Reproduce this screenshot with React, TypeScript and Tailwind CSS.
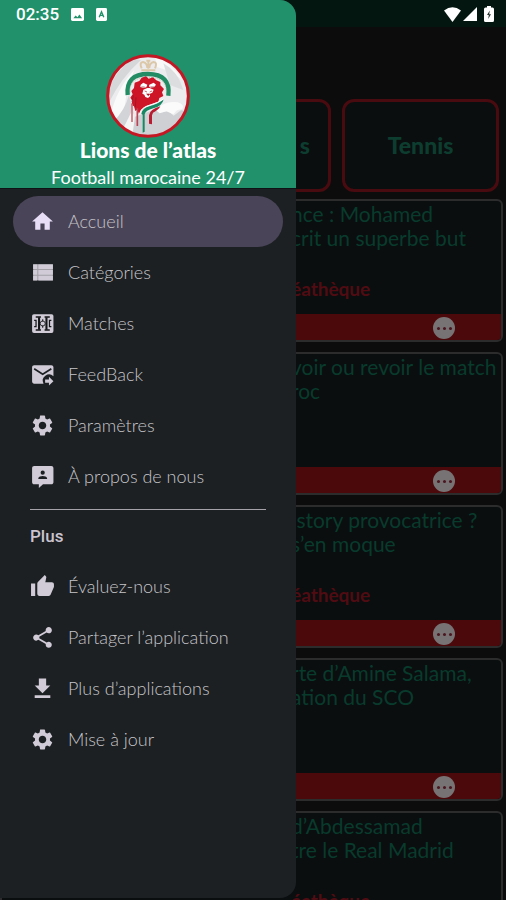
import type { ReactNode } from "react";
import { MdHome, MdSettings, MdShare, MdThumbUp } from "react-icons/md";

type MenuEntry = {
  label: string;
  icon: ReactNode;
  active?: boolean;
};

type Article = {
  lines: string[];
  tag?: string;
};

const iconClass = "h-[25px] w-[25px] shrink-0";

function ListIcon() {
  return (
    <svg viewBox="0 0 24 24" fill="currentColor" className={iconClass}>
      <path fillOpacity=".75" d="M3 4h19v15.500H3z" />
      <path d="M3 4.200h4v4.400H3zM8 4.200h14v4.400H8zM3 9.700h4v4.400H3zM8 9.700h14v4.400H8zM3 15.200h4v4.400H3zM8 15.200h14v4.400H8z" />
    </svg>
  );
}

function PitchIcon() {
  return (
    <svg viewBox="0 0 24 24" className={iconClass}>
      <rect x="2" y="3" width="20.500" height="18" rx="1.800" fill="currentColor" />
      <g fill="none" stroke="#141719">
        <path d="M5.500 5.800h5M14 5.800h5M5.500 18.200h5M14 18.200h5" strokeWidth="1.400" />
        <path d="M4 9h1.800v6H4M20.500 9h-1.800v6h1.800" strokeWidth="1.200" />
        <path d="M8.700 6v12M15.800 6v12" strokeWidth="2" />
        <path d="M12.200 8v2M12.200 14v2" strokeWidth="1" />
        <circle cx="12.200" cy="12" r="2.400" strokeWidth=".8" />
      </g>
    </svg>
  );
}

function FeedbackIcon() {
  return (
    <svg viewBox="0 0 24 24" className={iconClass}>
      <path
        fill="currentColor"
        d="M4 3h16.500c1.100 0 2 .9 2 2v8.700A6 6 0 0 0 13 20.800H4c-1.100 0-2-.9-2-2V5c0-1.100.9-2 2-2z"
      />
      <path d="M4 6.500l8.200 5.300 8.300-5.300" fill="none" stroke="#1c2023" strokeWidth="1.600" />
      <path fill="currentColor" d="M14.500 16.800h3.700v-2.600l4.300 4.200-4.300 4.200V20h-3.700z" />
    </svg>
  );
}

function AboutIcon() {
  return (
    <svg viewBox="0 0 24 24" className={iconClass}>
      <path
        fill="currentColor"
        d="M20.500 2H4c-1.100 0-2 .9-2 2v13.500c0 1.100.9 2 2 2h4.500v3.600l4-3.600h8c1.100 0 2-.9 2-2V4c0-1.100-.9-2-2-2z"
      />
      <circle cx="12.200" cy="8.300" r="2" fill="#1c2023" />
      <path fill="#1c2023" d="M8 14.500v-.8c0-1.500 2.600-2.300 4.200-2.300s4.200.8 4.200 2.300v.8z" />
    </svg>
  );
}

function DownloadIcon() {
  return (
    <svg viewBox="0 0 24 24" fill="currentColor" className={iconClass}>
      <path d="M19.500 9h-4V2.500h-7V9h-4l7.500 7.500zM4.500 18.500V21h15v-2.500z" />
    </svg>
  );
}

const mainMenu: MenuEntry[] = [
  { label: "Accueil", icon: <MdHome className={iconClass} />, active: true },
  { label: "Catégories", icon: <ListIcon /> },
  { label: "Matches", icon: <PitchIcon /> },
  { label: "FeedBack", icon: <FeedbackIcon /> },
  { label: "Paramètres", icon: <MdSettings className={iconClass} /> },
  { label: "À propos de nous", icon: <AboutIcon /> },
];

const moreMenu: MenuEntry[] = [
  { label: "Évaluez-nous", icon: <MdThumbUp className={iconClass} /> },
  { label: "Partager l’application", icon: <MdShare className={iconClass} /> },
  { label: "Plus d’applications", icon: <DownloadIcon /> },
  { label: "Mise à jour", icon: <MdSettings className={iconClass} /> },
];

const articles: Article[] = [
  { lines: ["nce : Mohamed", "crit un superbe but"], tag: "éathèque" },
  { lines: ["voir ou revoir le match", "roc"] },
  { lines: [" story provocatrice ?", "s’en moque"], tag: "éathèque" },
  { lines: ["rte d’Amine Salama,", "ation du SCO"] },
  { lines: ["d’Abdessamad", "tre le Real Madrid"], tag: "éathèque" },
];

function Logo() {
  return (
    <svg viewBox="33 27 252 252" className="h-[84px] w-[84px] shrink-0" role="img" aria-label="Lions de l’atlas">
      <defs>
        <clipPath id="disc">
          <circle cx="159" cy="153" r="119" />
        </clipPath>
      </defs>
      <circle cx="159" cy="153" r="121" fill="#ececee" />
      <g clipPath="url(#disc)">
        <path d="M33 190Q75 100 138 45L110 42Q50 90 33 150z" fill="#d6d7d9" />
        <path d="M45 215Q65 130 118 75Q85 145 90 215L65 250z" fill="#fafafa" />
        <path d="M55 230Q90 195 102 150L116 205Q95 235 75 260z" fill="#d3d4d7" />
        <path d="M85 250L112 195L122 240L105 275z" fill="#f5f5f6" />
        <path d="M182 35Q235 55 262 105Q225 75 182 65z" fill="#f8f8f8" />
        <path d="M205 55Q250 80 265 135L225 120z" fill="#dcdddf" />
        <path d="M120 215L190 190L200 202L220 198L236 212L258 196L285 200L250 270L110 285z" fill="#cfd0d3" />
        <path d="M182 195Q210 165 248 172Q270 178 262 192L246 196L235 208L214 199L194 205z" fill="#fbfbfb" />
      </g>
      <g fill="none" stroke="#dcc8a8" strokeWidth="6">
        <path d="M139 76h42M140 70q-8-18 4-19q12 2 13 18M180 70q8-18-4-19q-12 2-13 18M160 71V47M154 47h12" />
      </g>
      <path d="M98 150Q92 87 159 87Q228 87 220 152" fill="none" stroke="#238c65" strokeWidth="13" />
      <path d="M105 143Q102 97 159 97Q216 97 214 143" fill="none" stroke="#a4ad80" strokeWidth="2" strokeDasharray="3 3" />
      <path
        fill="#ce1528"
        d="M153 94L161 101L174 97L184 106L196 111L196 121L207 132L201 142L205 153L193 159L190 170L171 178L153 184L139 194L132 207L127 194L121 198L117 184L109 180L112 167L106 158L113 148L109 138L117 129L119 113L133 108L140 98z"
      />
      <g fill="#fff">
        <path d="M137 119l8-6 12 6-3 8-10 2-8-3zM163 119l13-6 7 6-6 8-11 1-4-4z" />
        <path d="M145 134l12-5h7l12 5-4 9-7 3v8l-6 5-8-3-3-7-6-3z" />
      </g>
      <path d="M149 138l7 3M171 138l-7 3M155 147h9l-4 5z" fill="#af1625" stroke="#af1625" strokeWidth="2" />
      <path d="M139 126h10M166 126h12M115 151l-4 20M123 157l-2 30" fill="none" stroke="#8b1723" strokeWidth="2" />
      <path d="M111 176v55" stroke="#cc7079" strokeWidth="5" />
      <path d="M127 190v53" stroke="#bd4352" strokeWidth="5" />
      <path d="M139 206Q141 190 165 183Q190 177 206 163Q202 184 175 190Q151 196 149 208V260L143 263V209z" fill="#178863" />
      <path d="M162 236V211Q164 193 196 184Q190 196 174 203L171 211V238z" fill="#b91c31" />
      <path d="M134 207Q136 188 165 180Q188 174 206 162" fill="none" stroke="#fff" strokeWidth="3" />
      <circle cx="159" cy="153" r="121" fill="none" stroke="#c51624" strokeWidth="9" />
    </svg>
  );
}

function StatusBar() {
  return (
    <div className="absolute inset-x-0 top-0 z-20 flex h-7 items-center justify-between pr-3 pl-4 text-white">
      <div className="flex items-center gap-3">
        <span className="font-[Roboto] text-[17px] leading-7 font-medium">02:35</span>
        <svg viewBox="0 0 14 14" className="h-[13px] w-[13px]">
          <rect width="14" height="14" rx="1.500" fill="currentColor" />
          <path d="M2.500 11l2.500-3 2 2 2-3 3 4z" fill="#20916b" />
        </svg>
        <svg viewBox="0 0 12 14" className="h-[13px] w-[11px]">
          <rect width="12" height="14" rx="1.500" fill="currentColor" />
          <path d="M3.500 10L6 4l2.500 6M4.500 8h3" fill="none" stroke="#20916b" strokeWidth="1.500" />
        </svg>
      </div>
      <div className="flex items-center gap-[2px]">
        <svg viewBox="0 0 17 15" className="h-[15px] w-[17px]" fill="currentColor">
          <path d="M0 3.500Q8.500-3 17 3.500L8.500 15z" />
        </svg>
        <svg viewBox="0 0 14 14" className="h-[14px] w-[14px]" fill="currentColor">
          <path d="M14 0v14H0z" />
        </svg>
        <svg viewBox="0 0 10 16" className="ml-[5px] h-4 w-[10px]">
          <path d="M3 0h4v1.500h1.500Q10 1.500 10 3v11.500q0 1.500-1.500 1.500h-7Q0 16 0 14.500V3q0-1.500 1.500-1.500H3z" fill="currentColor" />
          <path d="M5.800 4.500L3 9h1.800L4.200 13 7 8.300H5.200z" fill="#26332e" />
        </svg>
      </div>
    </div>
  );
}

function ArticleCard({ article }: { article: Article }) {
  return (
    <article className="flex h-[143px] shrink-0 flex-col overflow-hidden rounded-md border-2 border-[#2c2c2d] bg-[#0b0e0f]">
      <div className="flex-1 pl-[289px] whitespace-pre">
        <h2 className="pt-px font-[Lato] text-[21px] leading-6 text-[#083b2c]">
          {article.lines.map((line) => (
            <span key={line} className="block">
              {line}
            </span>
          ))}
        </h2>
        {article.tag && <p className="pt-[27px] font-[Lato] text-[19px] leading-6 font-bold text-[#500c12]">{article.tag}</p>}
      </div>
      <div className="flex h-[26px] shrink-0 items-end justify-end bg-[#4b090b] pr-[46px] pb-px">
        <button className="flex h-[22px] w-[22px] items-center justify-center gap-[3px] rounded-full bg-[#777374]" aria-label="Options">
          <i className="h-[3px] w-[3px] rounded-full bg-[#4b1620]" />
          <i className="h-[3px] w-[3px] rounded-full bg-[#4b1620]" />
          <i className="h-[3px] w-[3px] rounded-full bg-[#4b1620]" />
        </button>
      </div>
    </article>
  );
}

function Feed() {
  const tabClass =
    "flex h-full w-[157px] shrink-0 items-center rounded-xl border-[3px] border-[#490b10] bg-[#0b0e0f] font-[Lato] text-[23px] font-black text-[#0d3d2f]";

  return (
    <main className="flex h-full flex-col bg-[#0c0c0c]">
      <div className="h-[27px] shrink-0 bg-[#031710]" />
      <div className="mt-[72px] flex h-[93px] shrink-0 justify-end gap-[11px] pr-[7px]">
        <button className={`${tabClass} justify-end pr-[18px]`}>s</button>
        <button className={`${tabClass} justify-center`}>Tennis</button>
      </div>
      <div className="mt-[7px] min-h-0 flex-1 overflow-hidden pr-[3px]">
        <div className="flex flex-col gap-[10px]">
          {articles.map((article) => (
            <ArticleCard key={article.lines[0]} article={article} />
          ))}
        </div>
      </div>
    </main>
  );
}

function MenuList({ entries }: { entries: MenuEntry[] }) {
  return (
    <ul className="px-[13px]">
      {entries.map((entry) => (
        <li key={entry.label}>
          <a
            href="#"
            className={`flex h-[51px] items-center gap-[13px] rounded-full pl-[17px] font-[Lato] text-[18px] font-light ${
              entry.active ? "bg-[#4a4458] text-[#e8def8]" : "text-[#d0cbd6]"
            }`}
          >
            {entry.icon}
            <span className="text-[#c6c5c9]">{entry.label}</span>
          </a>
        </li>
      ))}
    </ul>
  );
}

function Drawer() {
  return (
    <aside className="absolute top-0 bottom-[2px] left-0 z-10 w-[296px] overflow-hidden rounded-r-2xl bg-[#1c2023]">
      <header className="flex h-[189px] flex-col items-center border-b border-[#101315] bg-[#20916b] pt-[54px] text-white">
        <Logo />
        <h1 className="font-[Lato] text-[21px] leading-6 font-black">Lions de l’atlas</h1>
        <p className="pt-[4px] font-[Lato] text-[18px] leading-[22px]">Football marocaine 24/7</p>
      </header>
      <nav className="pt-[7px]">
        <MenuList entries={mainMenu} />
        <hr className="mx-[30px] mt-[7px] border-[#a5a2aa]" />
        <h2 className="pt-[14px] pb-[13px] pl-[30px] font-[Roboto] text-[17px] leading-6 font-medium text-[#cac4d0]">Plus</h2>
        <MenuList entries={moreMenu} />
      </nav>
    </aside>
  );
}

export default function App() {
  return (
    <div className="relative h-screen overflow-hidden bg-[#0c0c0c]">
      <Feed />
      <Drawer />
      <StatusBar />
    </div>
  );
}
